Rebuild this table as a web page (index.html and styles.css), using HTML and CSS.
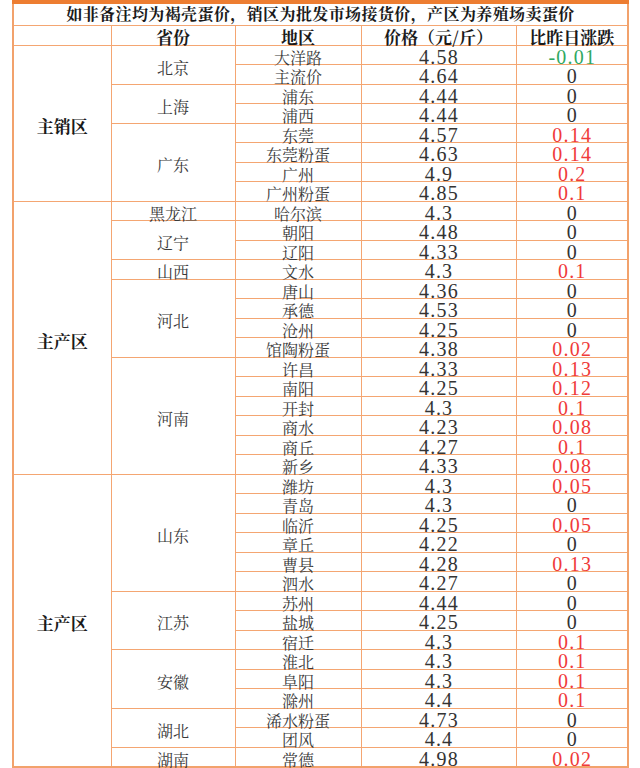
FILE: index.html
```html
<!DOCTYPE html>
<html lang="zh-CN">
<head>
<meta charset="utf-8">
<title>鸡蛋价格</title>
<link rel="stylesheet" href="styles.css">
</head>
<body>
<table class="price-table">
<colgroup>
<col class="c-zone"><col class="c-prov"><col class="c-city"><col class="c-price"><col class="c-diff">
</colgroup>
<tr class="title-row"><td colspan="5">如非备注均为褐壳蛋价，销区为批发市场接货价，产区为养殖场卖蛋价</td></tr>
<tr class="head-row"><td></td><td>省份</td><td>地区</td><td>价格（元/斤）</td><td>比昨日涨跌</td></tr>

<tr><td class="zone" rowspan="8">主销区</td><td rowspan="2">北京</td><td>大洋路</td><td class="num">4.58</td><td class="num down">-0.01</td></tr>
<tr><td>主流价</td><td class="num">4.64</td><td class="num">0</td></tr>
<tr><td rowspan="2">上海</td><td>浦东</td><td class="num">4.44</td><td class="num">0</td></tr>
<tr><td>浦西</td><td class="num">4.44</td><td class="num">0</td></tr>
<tr><td rowspan="4">广东</td><td>东莞</td><td class="num">4.57</td><td class="num up">0.14</td></tr>
<tr><td>东莞粉蛋</td><td class="num">4.63</td><td class="num up">0.14</td></tr>
<tr><td>广州</td><td class="num">4.9</td><td class="num up">0.2</td></tr>
<tr><td>广州粉蛋</td><td class="num">4.85</td><td class="num up">0.1</td></tr>

<tr><td class="zone" rowspan="14">主产区</td><td>黑龙江</td><td>哈尔滨</td><td class="num">4.3</td><td class="num">0</td></tr>
<tr><td rowspan="2">辽宁</td><td>朝阳</td><td class="num">4.48</td><td class="num">0</td></tr>
<tr><td>辽阳</td><td class="num">4.33</td><td class="num">0</td></tr>
<tr><td>山西</td><td>文水</td><td class="num">4.3</td><td class="num up">0.1</td></tr>
<tr><td rowspan="4">河北</td><td>唐山</td><td class="num">4.36</td><td class="num">0</td></tr>
<tr><td>承德</td><td class="num">4.53</td><td class="num">0</td></tr>
<tr><td>沧州</td><td class="num">4.25</td><td class="num">0</td></tr>
<tr><td>馆陶粉蛋</td><td class="num">4.38</td><td class="num up">0.02</td></tr>
<tr><td rowspan="6">河南</td><td>许昌</td><td class="num">4.33</td><td class="num up">0.13</td></tr>
<tr><td>南阳</td><td class="num">4.25</td><td class="num up">0.12</td></tr>
<tr><td>开封</td><td class="num">4.3</td><td class="num up">0.1</td></tr>
<tr><td>商水</td><td class="num">4.23</td><td class="num up">0.08</td></tr>
<tr><td>商丘</td><td class="num">4.27</td><td class="num up">0.1</td></tr>
<tr><td>新乡</td><td class="num">4.33</td><td class="num up">0.08</td></tr>

<tr><td class="zone" rowspan="15">主产区</td><td rowspan="6">山东</td><td>潍坊</td><td class="num">4.3</td><td class="num up">0.05</td></tr>
<tr><td>青岛</td><td class="num">4.3</td><td class="num">0</td></tr>
<tr><td>临沂</td><td class="num">4.25</td><td class="num up">0.05</td></tr>
<tr><td>章丘</td><td class="num">4.22</td><td class="num">0</td></tr>
<tr><td>曹县</td><td class="num">4.28</td><td class="num up">0.13</td></tr>
<tr><td>泗水</td><td class="num">4.27</td><td class="num">0</td></tr>
<tr><td rowspan="3">江苏</td><td>苏州</td><td class="num">4.44</td><td class="num">0</td></tr>
<tr><td>盐城</td><td class="num">4.25</td><td class="num">0</td></tr>
<tr><td>宿迁</td><td class="num">4.3</td><td class="num up">0.1</td></tr>
<tr><td rowspan="3">安徽</td><td>淮北</td><td class="num">4.3</td><td class="num up">0.1</td></tr>
<tr><td>阜阳</td><td class="num">4.3</td><td class="num up">0.1</td></tr>
<tr><td>滁州</td><td class="num">4.4</td><td class="num up">0.1</td></tr>
<tr><td rowspan="2">湖北</td><td>浠水粉蛋</td><td class="num">4.73</td><td class="num">0</td></tr>
<tr><td>团风</td><td class="num">4.4</td><td class="num">0</td></tr>
<tr><td>湖南</td><td>常德</td><td class="num">4.98</td><td class="num up">0.02</td></tr>
</table>
</body>
</html>
```

FILE: styles.css
```css
html, body {
  margin: 0;
  padding: 0;
  background: #ffffff;
}

body {
  font-family: "Noto Serif CJK SC", "Noto Sans CJK SC", serif;
  color: #3a3a3a;
}

.price-table {
  margin-left: 12px;
  width: 615px;
  table-layout: fixed;
  border-collapse: collapse;
  border-top: 4px solid #ed7d31;
  border-left: 2px solid #f2a26c;
  border-right: 2px solid #f2a26c;
  border-bottom: 2px solid #f2a26c;
}

.c-zone { width: 98px; }
.c-prov { width: 124px; }
.c-city { width: 126px; }
.c-price { width: 155px; }
.c-diff { width: 112px; }

.price-table td {
  border: 1px solid #f4a672;
  padding: 5px 0 0;
  text-align: center;
  vertical-align: middle;
  font-size: 16px;
  line-height: 13px;
  white-space: nowrap;
}

.price-table tr {
  height: 19.5px;
}

.price-table .title-row {
  height: 23px;
}

.price-table .title-row td {
  font-size: 16px;
  line-height: 16px;
  font-weight: bold;
  color: #1a1a1a;
  letter-spacing: 0.4px;
  padding-top: 0;
}

.price-table .head-row {
  height: 20px;
}

.price-table .head-row td {
  font-size: 17px;
  line-height: 15px;
  font-weight: bold;
  color: #1a1a1a;
  padding-top: 3px;
}

.price-table td.zone {
  font-size: 17px;
  font-weight: bold;
  color: #1a1a1a;
}

.price-table td.num {
  font-family: "Liberation Serif", serif;
  font-size: 20px;
  letter-spacing: 1.2px;
  text-indent: 1px;
  color: #333333;
}

.price-table td.up {
  color: #f03a3a;
}

.price-table td.down {
  color: #2fa862;
}
```
